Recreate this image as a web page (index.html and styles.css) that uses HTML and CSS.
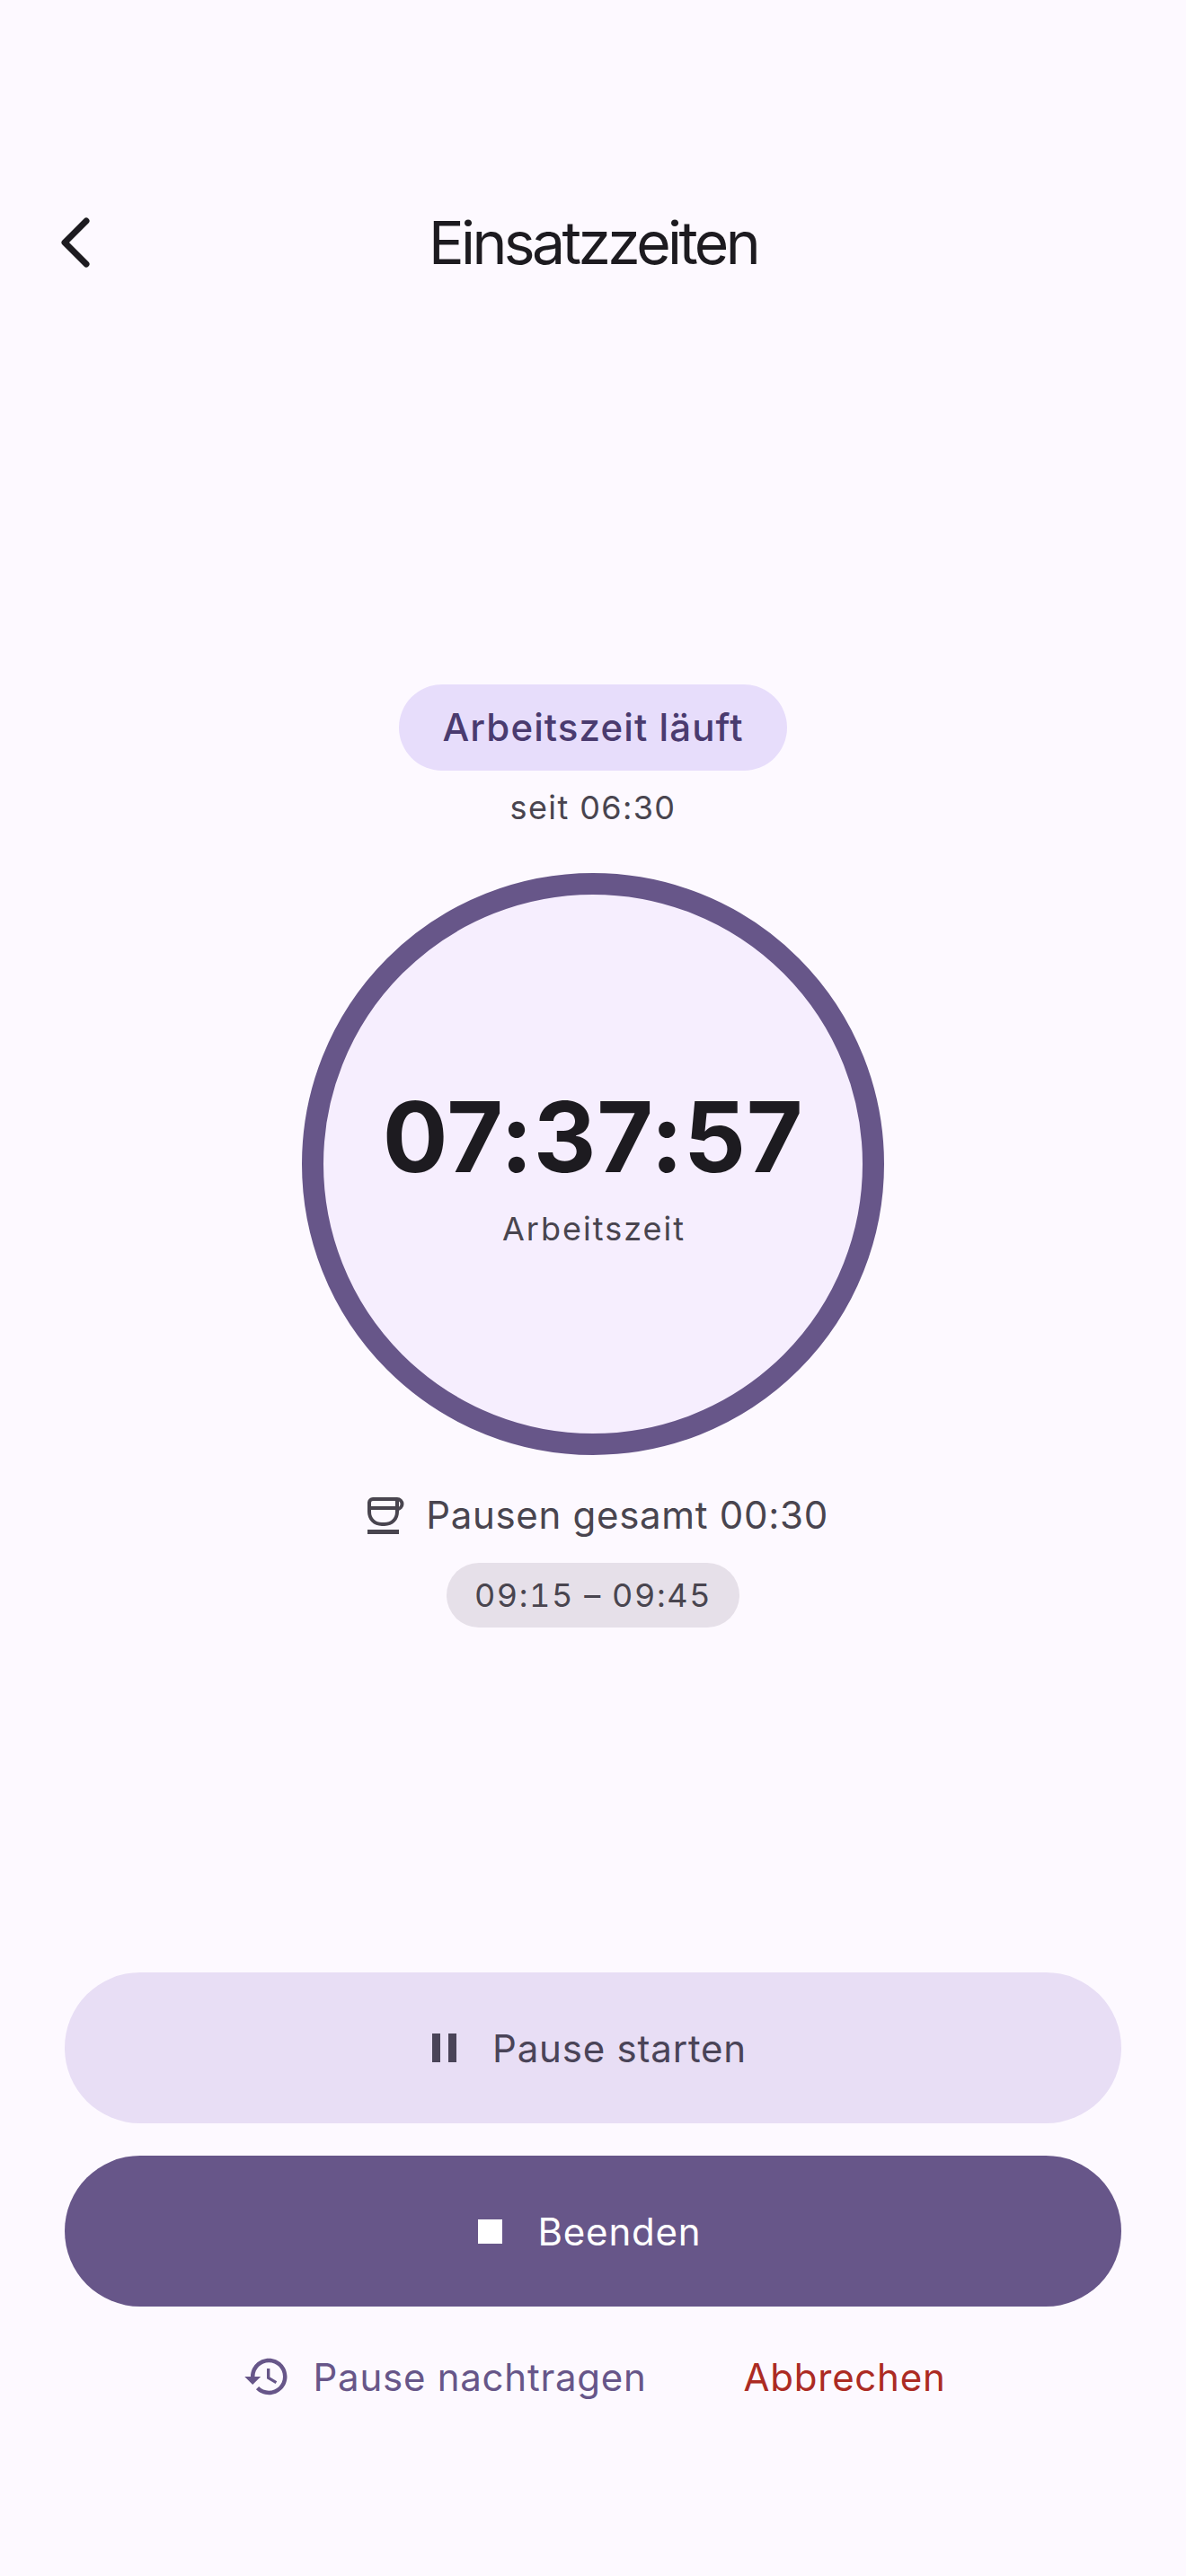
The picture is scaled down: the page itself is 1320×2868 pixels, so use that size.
FILE: index.html
```html
<!DOCTYPE html>
<html lang="de">
<head>
  <meta charset="UTF-8">
  <title>Einsatzzeiten</title>
  <link rel="stylesheet" href="styles.css">
</head>
<body>
  <div class="screen">
    <header class="topbar">
      <button class="back" aria-label="Zurück">
        <svg viewBox="0 0 36 60" width="36" height="60"><path d="M30 6 6 30l24 24" fill="none" stroke="#1d1b20" stroke-width="7" stroke-linecap="round" stroke-linejoin="round"/></svg>
      </button>
      <h1>Einsatzzeiten</h1>
    </header>

    <main class="status">
      <div class="chip">Arbeitszeit läuft</div>
      <div class="since">seit 06:30</div>
      <div class="ring">
        <div class="time">07:37:57</div>
        <div class="ring-label">Arbeitszeit</div>
      </div>
      <div class="breaks">
        <svg viewBox="0 0 42 42" width="42" height="42"><path d="M3 7a4 4 0 0 1 4-4h27a5.500 5.500 0 0 1 0 11M3 7v10c0 8.500 6 14 14 14h3c8 0 14-5.500 14-14V3M3 13h31" fill="none" stroke="#49454f" stroke-width="4"/><path d="M1 37h35v5H1z" fill="#49454f"/></svg>
        <span>Pausen gesamt 00:30</span>
      </div>
      <div class="pill">09:15 – 09:45</div>
    </main>

    <footer class="actions">
      <button class="btn btn-tonal">
        <svg viewBox="0 0 27 32" width="27" height="32"><path d="M0 0h9v32H0zM18 0h9v32h-9z" fill="#4a4458"/></svg>
        Pause starten
      </button>
      <button class="btn btn-filled">
        <svg viewBox="0 0 27 27" width="27" height="27"><path d="M0 0h27v27H0z" fill="#fff"/></svg>
        Beenden
      </button>
      <div class="links">
        <a class="link link-primary">
          <svg viewBox="0 0 24 24" width="54" height="54"><path d="M13 3c-4.970 0-9 4.030-9 9H1l3.890 3.890.07.14L9 12H6c0-3.870 3.130-7 7-7s7 3.130 7 7-3.130 7-7 7c-1.930 0-3.680-.79-4.940-2.060l-1.420 1.420C8.270 19.990 10.510 21 13 21c4.970 0 9-4.030 9-9s-4.030-9-9-9zm-1 5v5l4.280 2.540.72-1.210-3.500-2.080V8H12z" fill="#675689"/></svg>
          Pause nachtragen
        </a>
        <a class="link link-danger">Abbrechen</a>
      </div>
    </footer>
  </div>
</body>
</html>
```

FILE: styles.css
```css
* {
  box-sizing: border-box;
}
body {
  margin: 0;
  background: #fdf9ff;
  font-family: Inter, "Noto Sans", sans-serif;
  color: #49454f;
}
button {
  font-family: inherit;
  border: none;
  padding: 0;
}
svg {
  display: block;
  flex-shrink: 0;
}
.screen {
  display: flex;
  flex-direction: column;
  height: 2868px;
}
.topbar {
  position: relative;
  display: flex;
  align-items: center;
  justify-content: center;
  height: 168px;
  margin-top: 186px;
}
.back {
  position: absolute;
  left: 66px;
  top: 54px;
  background: none;
}
h1 {
  margin: 0;
  font-size: 66px;
  font-weight: 400;
  letter-spacing: -3.6px;
  color: #1d1b20;
}
.status {
  display: flex;
  flex-direction: column;
  align-items: center;
  margin-top: 408px;
}
.chip {
  height: 96px;
  line-height: 96px;
  padding: 0 48px;
  border-radius: 48px;
  background: #e7ddfb;
  color: #4a3b6f;
  font-size: 42px;
  font-weight: 550;
  letter-spacing: 1.1px;
}
.since {
  margin-top: 17px;
  font-size: 36px;
  line-height: 48px;
  letter-spacing: 1.4px;
}
.ring {
  display: flex;
  flex-direction: column;
  align-items: center;
  justify-content: center;
  width: 648px;
  height: 648px;
  margin-top: 49px;
  border: 24px solid #675689;
  border-radius: 50%;
  background: #f6eefe;
}
.time {
  font-size: 108px;
  font-weight: 700;
  line-height: 132px;
  letter-spacing: 0.7px;
  color: #1d1b20;
}
.ring-label {
  margin-top: 12px;
  padding-left: 2px;
  font-size: 36px;
  line-height: 48px;
  letter-spacing: 2px;
}
.breaks {
  display: flex;
  align-items: center;
  gap: 24px;
  margin-top: 37px;
  padding-left: 10px;
  font-size: 42px;
  line-height: 60px;
  letter-spacing: 0.7px;
}
.pill {
  height: 72px;
  line-height: 72px;
  margin-top: 23px;
  padding: 0 31px;
  border-radius: 36px;
  background: #e6e0e9;
  font-size: 36px;
  font-variant-numeric: tabular-nums;
  letter-spacing: 1.6px;
}
.actions {
  display: flex;
  flex-direction: column;
  gap: 36px;
  margin-top: auto;
  padding: 0 72px 192px;
}
.btn {
  display: flex;
  align-items: center;
  justify-content: center;
  gap: 40px;
  height: 168px;
  padding-right: 8px;
  border-radius: 84px;
  font-size: 42px;
  letter-spacing: 0.8px;
}
.btn-tonal {
  background: #e8def5;
  color: #4a4458;
}
.btn-filled {
  background: #675689;
  color: #fff;
}
.links {
  display: flex;
  justify-content: center;
  align-items: center;
  gap: 108px;
  height: 60px;
  margin-top: 12px;
  padding-left: 3px;
  font-size: 42px;
  letter-spacing: 0.75px;
}
.link {
  display: flex;
  align-items: center;
  gap: 24px;
}
.link-primary {
  color: #675689;
}
.link-danger {
  color: #ac2b23;
}
```
